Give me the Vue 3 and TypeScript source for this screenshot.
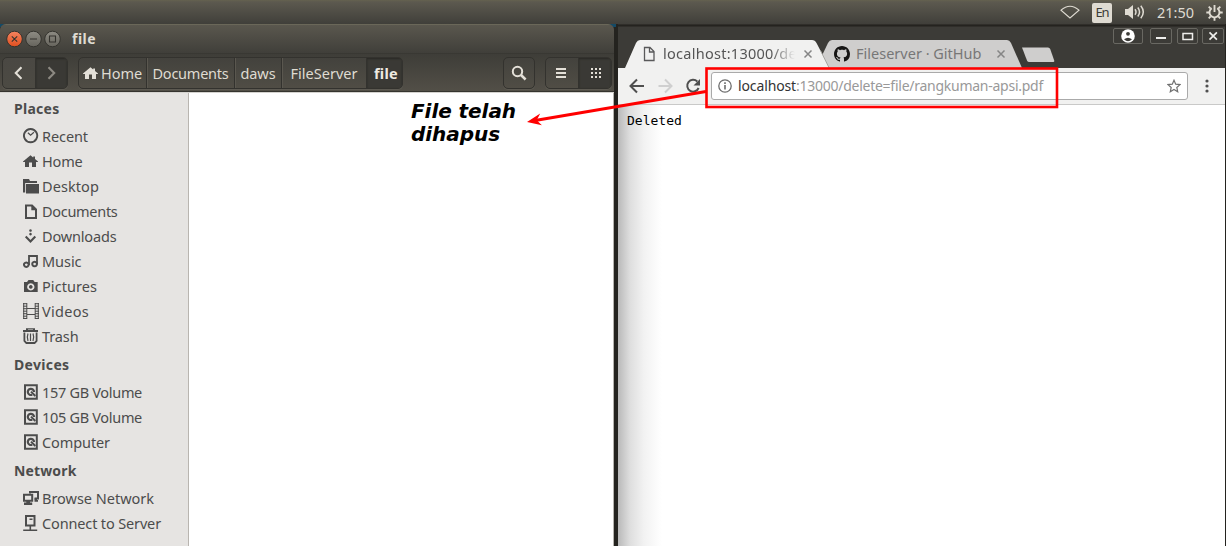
<script setup lang="ts">
import type { Directive } from 'vue'

interface Shape { d: string; w?: number; even?: boolean }
interface Entry { icon: string; label: string; width: number }
interface Section { title: string; width: number; entries: Entry[] }

/* Spreads a label's letters so that it takes the given width. */
const vFit: Directive<HTMLElement, number> = {
  mounted(el, { value }) {
    const count = (el.textContent ?? '').length
    const natural = el.getBoundingClientRect().width
    el.style.letterSpacing = `${(value - natural) / count}px`
  },
}

const drive: Shape[] = [
  { d: 'M2 1.200h11.800v13.600h-11.800z', w: 2 },
  { d: 'M9.200 10.700A3.100 3.100 0 1 1 11 8', w: 2.2 },
  { d: 'M8 7.600l4.300 4.400', w: 2 },
]

const icons: Record<string, Shape[]> = {
  recent: [{ d: 'M7.6 1a6.6 6.6 0 1 0 .01 0z', w: 1.9 }, { d: 'M4.9 4.7l2.7 2.6 3.3-3', w: 1.2 }],
  home: [{ d: 'M7.5 2.3L0 8.5v.6h2V14h4V9.5h3V14h4V9.1h2v-.6L12 6V3.5h-1.8v1z' }],
  desktop: [{ d: 'M0 1h6l1 2h7v2H2.2v9.5H0z' }, { d: 'M3 6h13v9.5H3z' }],
  documents: [{ d: 'M3 2.5h6l4 4v8.5H3z', w: 2 }, { d: 'M8.3 2v5.2h5z' }],
  downloads: [{ d: 'M7.5 1.2a1.3 1.3 0 1 0 .01 0zM7.5 4.8a1.3 1.3 0 1 0 .01 0z' }, { d: 'M2.7 8.6l4.8 4.8 4.8-4.8', w: 2.1 }],
  music: [{ d: 'M6 12V3h8v8', w: 1.8 }, { d: 'M3.3 9.4a2.3 2.3 0 1 0 .01 0zM11.6 8.7a2.3 2.3 0 1 0 .01 0z', w: 2 }],
  pictures: [{ d: 'M1 4h3l1.5-2h4.7L11.7 4h3v10H1zM7.8 5.3a3.6 3.6 0 1 0 .01 0zM7.8 7.1a1.8 1.8 0 1 1-.01 0z', even: true }],
  videos: [{ d: 'M.7 0v16M3.8 0v16M12.2 0v16M15.3 0v16', w: 1 }, { d: 'M0 .7h4M0 3.2h4M0 5.7h4M0 8.2h4M0 10.7h4M0 13.2h4M0 15.5h4M12 .7h4M12 3.2h4M12 5.7h4M12 8.2h4M12 10.7h4M12 13.2h4M12 15.5h4', w: 1 }, { d: 'M4 5.500h8M4 11.500h8', w: 1.2 }],
  trash: [{ d: 'M0 4V2h3V.2h9V2h3v2zM5 2h5v-.6H5z', even: true }, { d: 'M1.400 4.500v8.300l2 2.200h8.200l2-2.200v-8.300', w: 1.8 }, { d: 'M5 5.5c-.8 2-.8 5 0 7.5M10 5.5c.8 2 .8 5 0 7.5M7.5 5.5V13', w: 1.2 }],
  drive,
  network: [{ d: 'M7 3.500V2h8v6.500h-3.500', w: 2 }, { d: 'M1 4.800h8.200v6H1z', w: 2 }, { d: 'M3.300 11h3.700v1.500h2.200V15H1v-2.500h2.300zM11.500 8.500h2.500v1.500h1v1.800h-3.500z' }],
  server: [{ d: 'M3 1h8.5v9.5H3z', w: 2 }, { d: 'M6.500 4.2h3M7.3 11v4M.2 15.2h14', w: 1.6 }],
}

const sections: Section[] = [
  {
    title: 'Places', width: 45.5, entries: [
      { icon: 'recent', label: 'Recent', width: 46 },
      { icon: 'home', label: 'Home', width: 40.5 },
      { icon: 'desktop', label: 'Desktop', width: 57 },
      { icon: 'documents', label: 'Documents', width: 75.5 },
      { icon: 'downloads', label: 'Downloads', width: 74.5 },
      { icon: 'music', label: 'Music', width: 39.5 },
      { icon: 'pictures', label: 'Pictures', width: 55 },
      { icon: 'videos', label: 'Videos', width: 47 },
      { icon: 'trash', label: 'Trash', width: 36.5 },
    ],
  },
  {
    title: 'Devices', width: 55.5, entries: [
      { icon: 'drive', label: '157 GB Volume', width: 100 },
      { icon: 'drive', label: '105 GB Volume', width: 100 },
      { icon: 'drive', label: 'Computer', width: 68 },
    ],
  },
  {
    title: 'Network', width: 62.5, entries: [
      { icon: 'network', label: 'Browse Network', width: 112 },
      { icon: 'server', label: 'Connect to Server', width: 119 },
    ],
  },
]
</script>

<template>
  <div class="screen">
    <header class="panel">
      <svg class="wifi" width="20" height="14" viewBox="0 0 20 14"><path d="M1 5.2Q10-2.8 19 5.2L10 13z" fill="none" stroke="#dfdbd2" stroke-width="1.1" /></svg>
      <span class="lang"><span v-fit="13">En</span></span>
      <svg class="sound" width="21" height="16" viewBox="0 0 21 16">
        <path d="M0 5h3l5-4v14l-5-4H0z" fill="#dfdbd2" />
        <path d="M10 5.3q2 2.7 0 5.4M12.8 3.5q3.5 4.5 0 9M15.8 1.7q5 6.3 0 12.6" fill="none" stroke="#dfdbd2" stroke-width="1.5" />
      </svg>
      <span class="clock"><span v-fit="37">21:50</span></span>
      <svg class="gear" width="17" height="17" viewBox="0 0 17 17">
        <g fill="none" stroke="#dfdbd2" stroke-width="1.900">
          <path d="M5.800 4.200a5 5 0 1 0 5.400 0" />
          <path d="M8.500 1v7" />
          <path d="M.3 8.500h3M13.700 8.500h3M8.500 13.700v3M2.700 2.700l2 2M14.300 2.700l-2 2M2.700 14.300l2-2M14.300 14.300l-2-2" />
        </g>
      </svg>
    </header>

    <main class="desk">
      <section class="files">
        <div class="titlebar">
          <svg width="66" height="20" viewBox="0 0 66 20">
            <defs>
              <linearGradient id="orange" x2="0" y2="1"><stop stop-color="#f58460" /><stop offset="1" stop-color="#e04f1f" /></linearGradient>
              <linearGradient id="grey" x2="0" y2="1"><stop stop-color="#8e8c84" /><stop offset="1" stop-color="#66645d" /></linearGradient>
            </defs>
            <g stroke="#34332e">
              <circle cx="14.5" cy="10" r="7.8" fill="url(#orange)" />
              <circle cx="33.5" cy="10" r="7.8" fill="url(#grey)" />
              <circle cx="52.5" cy="10" r="7.8" fill="url(#grey)" />
              <path d="M11.8 7.3l5.4 5.4M17.2 7.3l-5.4 5.4M30 10h7M49.5 7h6v6h-6z" fill="none" stroke-width="1.1" />
            </g>
          </svg>
          <strong v-fit="24">file</strong>
        </div>
        <div class="tools">
          <div class="group nav">
            <span class="cell"><svg width="9" height="14" viewBox="0 0 9 14"><path d="M7.5 1.2L1.8 7l5.7 5.8" fill="none" stroke="#e4e0d8" stroke-width="2.1" /></svg></span>
            <span class="cell sunk"><svg width="9" height="14" viewBox="0 0 9 14"><path d="M1.5 1.2L7.2 7l-5.7 5.8" fill="none" stroke="#8d8a83" stroke-width="2.1" /></svg></span>
          </div>
          <div class="group path">
            <span class="cell crumb-home"><svg width="15" height="16" viewBox="0 0 15 16"><path :d="icons.home[0].d" fill="#e4e0d8" /></svg><span v-fit="41">Home</span></span>
            <span class="cell crumb-docs"><span v-fit="76">Documents</span></span>
            <span class="cell crumb-daws"><span v-fit="35">daws</span></span>
            <span class="cell crumb-server"><span v-fit="67">FileServer</span></span>
            <span class="cell crumb-file sunk"><strong v-fit="24">file</strong></span>
          </div>
          <div class="group search"><span class="cell"><svg width="16" height="16" viewBox="0 0 16 16"><circle cx="6.5" cy="6.5" r="4.7" fill="none" stroke="#e4e0d8" stroke-width="2" /><path d="M10 10l4.6 4.5" stroke="#e4e0d8" stroke-width="2.5" /></svg></span></div>
          <div class="group view">
            <span class="cell list"><svg width="10" height="10" viewBox="0 0 10 10"><path d="M0 1h10M0 5h10M0 9h10" stroke="#e4e0d8" stroke-width="2" /></svg></span>
            <span class="cell grid sunk"><svg width="10" height="10" viewBox="0 0 10 10"><path d="M0 1h10M0 5h10M0 9h10" stroke="#e4e0d8" stroke-width="2" stroke-dasharray="2 2" /></svg></span>
          </div>
        </div>
        <div class="body">
          <aside class="sidebar">
            <template v-for="section in sections" :key="section.title">
              <h2><span v-fit="section.width">{{ section.title }}</span></h2>
              <div v-for="entry in section.entries" :key="entry.label" class="entry">
                <svg width="16" height="16" viewBox="0 0 16 16">
                  <path
                    v-for="(shape, i) in icons[entry.icon]" :key="i" :d="shape.d"
                    :fill="shape.w ? 'none' : '#4c4c4c'" :stroke="shape.w ? '#4c4c4c' : 'none'"
                    :stroke-width="shape.w" :fill-rule="shape.even ? 'evenodd' : 'nonzero'"
                  />
                </svg>
                <span v-fit="entry.width">{{ entry.label }}</span>
              </div>
            </template>
          </aside>
          <div class="folder"></div>
        </div>
      </section>

      <section class="browser">
        <svg class="frame" width="608" height="44" viewBox="618 24 608 44">
          <path d="M618 25.5h608" stroke="#24231f" stroke-width="2" />
          <path d="M816 68l12-25q1.500-3 4-3h175q2.500 0 4 3l11 25z" fill="#cfcecd" />
          <path d="M618 68h7l11-25q1.500-3 4-3h172q3 0 4.500 3l13 25z" fill="#f1f1f0" />
          <path d="M820.500 50.500l8.700 17.500" stroke="#a5a4a0" />
          <path d="M1022 47.500h26q1.500 0 2.200 1.500l4 11.500q.5 1.500-1 1.500h-24q-1.500 0-2.200-1.500z" fill="#cfcecd" />
          <path d="M644.500 47.500h5.500l4 4v9h-9.500zM649.500 47.500v4.500h4.500" fill="none" stroke="#59595a" stroke-width="1.300" />
          <path d="M804.500 50.500l7 7M811.500 50.500l-7 7" stroke="#858585" stroke-width="1.500" />
          <path d="M997.500 50.500l7 7M1004.500 50.500l-7 7" stroke="#858585" stroke-width="1.500" />
          <g transform="translate(834 46)"><path d="M8 0C3.580 0 0 3.580 0 8c0 3.540 2.290 6.530 5.470 7.590.4.070.55-.17.55-.38 0-.19-.01-.82-.01-1.490-2.010.37-2.530-.49-2.690-.94-.09-.23-.48-.94-.82-1.130-.28-.15-.68-.52-.01-.53.63-.01 1.080.58 1.230.82.72 1.210 1.870.87 2.330.66.07-.52.28-.87.51-1.070-1.780-.2-3.640-.89-3.640-3.950 0-.87.31-1.590.82-2.150-.08-.2-.36-1.020.08-2.120 0 0 .67-.21 2.200.82.64-.18 1.320-.27 2-.27s1.360.09 2 .27c1.530-1.040 2.200-.82 2.200-.82.44 1.100.16 1.920.08 2.120.51.56.82 1.270.82 2.150 0 3.070-1.870 3.750-3.650 3.950.29.25.54.73.54 1.480 0 1.070-.01 1.930-.01 2.200 0 .21.15.46.55.38A8 8 0 0 0 16 8c0-4.420-3.580-8-8-8z" fill="#161514" /></g>
          <g fill="none" stroke="#696862">
            <rect x="1113.500" y="28.500" width="29" height="15" rx="1.500" />
            <rect x="1150.500" y="28.500" width="21" height="15" rx="1.500" />
            <rect x="1177.500" y="28.500" width="20" height="15" rx="1.500" />
            <rect x="1202.500" y="28.500" width="21" height="15" rx="1.500" />
          </g>
          <circle cx="1128" cy="36" r="6.800" fill="#fff" />
          <circle cx="1128" cy="33.800" r="1.900" fill="#3c3b37" /><path d="M1124 39.300q4-3.300 8 0-4 4-8 0z" fill="#3c3b37" />
          <g fill="none" stroke="#eeeeec">
            <path d="M1156 38h10" stroke-width="2" />
            <path d="M1183 33.500h9.500v6h-9.500z" stroke-width="1.500" />
            <path d="M1209.500 32.300l7.400 7.400M1216.900 32.300l-7.400 7.400" stroke-width="1.700" />
          </g>
        </svg>
        <div class="tab-titles">
          <span class="tab-one"><span v-fit="138">localhost:13000/del</span></span>
          <span class="tab-two"><span v-fit="125.500">Fileserver · GitHub</span></span>
        </div>
        <div class="address">
          <svg class="arrows" width="92" height="36" viewBox="618 68 92 36">
            <g fill="none" stroke="#4f4f4f" stroke-width="2">
              <path d="M644 86h-13M637 79.500l-6.500 6.500 6.500 6.500" />
              <path d="M658.500 86h13M665 79.500l6.500 6.500-6.500 6.500" stroke="#cfcfcf" />
              <path d="M697.300 81.500a5.900 5.900 0 1 0 1.300 6.500" />
            </g>
            <path d="M700 79v6.500h-6.500z" fill="#4f4f4f" />
          </svg>
          <div class="url">
            <svg width="14" height="14" viewBox="0 0 14 14"><circle cx="7" cy="7" r="6.200" fill="none" stroke="#6d6d6d" stroke-width="1.300" /><path d="M7 6v4.500M7 3.300v1.600" stroke="#6d6d6d" stroke-width="1.600" /></svg>
            <span v-fit="58" class="host">localhost</span><span v-fit="247" class="rest">:13000/delete=file/rangkuman-apsi.pdf</span>
            <svg class="star" width="14" height="14" viewBox="0 0 14 14"><path d="M7 1.200l1.700 4 4.300.4-3.200 2.900.9 4.200L7 10.500l-3.700 2.200.9-4.200L1 5.600l4.300-.4z" fill="none" stroke="#707070" stroke-width="1.200" /></svg>
          </div>
          <svg class="dots" width="4" height="14" viewBox="0 0 4 14"><g fill="#505050"><circle cx="2" cy="2" r="1.600" /><circle cx="2" cy="7" r="1.600" /><circle cx="2" cy="12" r="1.600" /></g></svg>
        </div>
        <div class="page"><pre>Deleted</pre></div>
      </section>
    </main>

    <p class="note"><span v-fit="105">File telah</span><br /><span v-fit="89">dihapus</span></p>
    <svg class="callout" width="1226" height="546" viewBox="0 0 1226 546">
      <rect x="706.500" y="68.500" width="350.500" height="38.500" fill="none" stroke="#f00" stroke-width="2.600" />
      <path d="M706 91.500L535 120.500" stroke="#f00" stroke-width="2.800" />
      <path d="M527 122l13.200-8.500-3.500 6.800 5.200 5z" fill="#f00" />
    </svg>
  </div>
</template>

<style>
body { margin: 0; overflow: hidden; }
</style>

<style scoped>
.screen { position: relative; display: flex; flex-direction: column; width: 1226px; height: 546px; overflow: hidden; background: #24231f; font: 14.5px/20px "Noto Sans", "Open Sans", sans-serif; color: #4c4c4c; }
.screen span, .screen strong { white-space: pre; }
svg { display: block; flex: none; }
.panel { display: flex; align-items: center; height: 24px; box-sizing: border-box; padding-left: 1060px; background: linear-gradient(#65624f 0, #5c594f 2px, #403f3a); color: #dfdbd2; }
.lang { display: flex; justify-content: center; align-items: center; width: 20px; height: 20px; box-sizing: border-box; padding-bottom: 1px; margin: 1px 0 0 12px; border-radius: 2px; background: #dfdbd2; color: #3c3b37; font-size: 13px; }
.sound { margin-left: 13px; }
.clock { width: 37px; margin: -1px 0 0 11px; }
.gear { margin-left: 12px; }
.desk { display: flex; flex: 1; min-height: 0; background: linear-gradient(#144a66, #144a66) 0 0 / 616px 3px no-repeat #24231f; }
.files { display: flex; flex-direction: column; width: 614px; margin-right: 4px; overflow: hidden; border-radius: 6px 6px 0 0; background: #3c3b37; }
.titlebar { display: flex; align-items: center; height: 29px; box-sizing: border-box; border-top: 1px solid #6a6759; background: linear-gradient(#5a574e, #403f3a); color: #dfdbd2; }
.titlebar strong { margin-left: 6px; font-size: 14px; }
.tools { display: flex; height: 39px; box-sizing: border-box; padding: 3px 2px 0; border-top: 1px solid #393833; border-bottom: 1px solid #35342f; background: linear-gradient(#3e3d38, #524f47); color: #dfdbd2; }
.group { display: flex; height: 32px; box-sizing: border-box; border: 1px solid #33322e; border-radius: 5px; overflow: hidden; background: linear-gradient(#43423d, #504d45); box-shadow: 0 1px 0 #5d5a52; }
.cell { display: flex; align-items: center; justify-content: center; flex: 1; }
.cell + .cell { border-left: 1px solid #33322e; box-shadow: inset 1px 0 #5a574f; }
.cell.sunk, .cell + .cell.sunk { background: #3a3935; box-shadow: inset 0 1px 2px #292824; }
.nav { width: 66px; background: linear-gradient(#4a4843, #4c4a43); }
.path { width: 325px; margin-left: 10px; }
.path .cell { flex: none; box-sizing: border-box; padding-bottom: 1px; }
.path .crumb-home { width: 67px; gap: 3px; }
.crumb-docs { width: 88px; }
.crumb-daws { width: 47px; }
.crumb-server { width: 85px; }
.path .crumb-file { flex: 1; padding-left: 3px; color: #eeeae2; }
.search { width: 32px; margin-left: 100px; }
.view { width: 67px; margin-left: 10px; }
.view .list { box-sizing: border-box; padding-right: 2px; }
.view .grid { box-sizing: border-box; padding-left: 2px; }
.body { display: flex; flex: 1; box-sizing: border-box; min-height: 0; border-top: 1px solid #d5d3cf; }
.sidebar { width: 188px; border-right: 1px solid #b9b5b0; background: #e6e4e2; }
h2 { display: flex; align-items: center; height: 31px; margin: 0; padding-left: 14px; font-size: 14px; line-height: 20px; font-weight: 700; }
.entry { display: flex; align-items: flex-start; height: 25px; padding-left: 23px; }
.entry svg { margin-top: 4px; }
.entry span { margin: 2px 0 0 3px; }
.folder { flex: 1; background: #fff; border-right: 1px solid #b5b3ae; }
.browser { position: relative; display: flex; flex-direction: column; width: 607px; background: #3c3b37; }
.tab-titles { position: absolute; left: 45px; top: 19px; color: #555; }
.tab-one { display: block; width: 140px; -webkit-mask-image: linear-gradient(90deg, #000 108px, transparent 132px); mask-image: linear-gradient(90deg, #000 108px, transparent 132px); }
.tab-two { position: absolute; left: 193px; top: 0; color: #777; }
.address { display: flex; align-items: center; height: 37px; box-sizing: border-box; border-bottom: 1px solid #c9c9c8; background: #f1f1f0; color: #333; }
.url { display: flex; align-items: center; width: 477px; height: 28px; box-sizing: border-box; margin-left: 1px; padding: 0 6px; border: 1px solid #aaa; border-radius: 3px; background: #fff; }
.host { margin-left: 6px; font-size: 14px; }
.rest { color: #999; font-size: 14px; }
.star { margin-left: auto; }
.dots { margin-left: 16.500px; }
.page { flex: 1; background: linear-gradient(90deg, #b9b9b9 0, #dedede 12px, #f2f2f2 26px, #fff 44px); }
pre { margin: 8px 0 0 9px; color: #000; font: 13px/15px "DejaVu Sans Mono", monospace; }
.note { position: absolute; left: 411px; top: 100px; margin: 0; color: #000; font: italic bold 20px/23px "DejaVu Sans", sans-serif; }
.callout { position: absolute; left: 0; top: 0; }
</style>
